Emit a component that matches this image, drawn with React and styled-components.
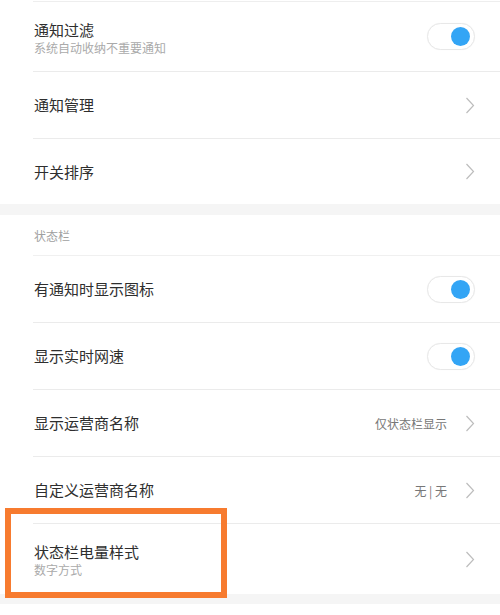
import React from "react";
import styled, { createGlobalStyle } from "styled-components";

const Global = createGlobalStyle`
  html, body { margin: 0; padding: 0; background: #ffffff; }
  body { font-family: "Noto Sans CJK SC", "Noto Sans", sans-serif; -webkit-font-smoothing: antialiased; }
`;

const Page = styled.div`
  position: relative;
  width: 500px;
  height: 615px;
  overflow: hidden;
  background: #ffffff;
  display: flex;
  flex-direction: column;
`;

const TopLine = styled.div`
  height: 1px;
  margin-top: 1px;
  margin-left: 33px;
  background: #eeeeee;
`;

const Group = styled.div`
  display: flex;
  flex-direction: column;
  background: #ffffff;
  flex: ${(p) => (p.$fill ? 1 : "none")};
`;

const Band = styled.div`
  height: ${(p) => p.$h}px;
  flex-shrink: 0;
  background: #f5f5f5;
`;

const Row = styled.div`
  display: flex;
  align-items: center;
  height: ${(p) => p.$h || 66}px;
  flex-shrink: 0;
  padding: 0 25px 0 34px;
  position: relative;
  &::after {
    content: "";
    display: ${(p) => (p.$last ? "none" : "block")};
    position: absolute;
    left: 33px;
    right: 0;
    bottom: -1px;
    height: 1px;
    background: #ebebeb;
  }
  margin-bottom: ${(p) => (p.$last ? 0 : 1)}px;
`;

const Texts = styled.div`
  flex: 1;
  display: flex;
  flex-direction: column;
  min-width: 0;
`;

const Title = styled.div`
  font-size: 15px;
  line-height: 22px;
  color: #2e2e2e;
`;

const Sub = styled.div`
  font-size: 12px;
  line-height: 14px;
  color: #aaaaaa;
`;

const Header = styled.div`
  height: 40px;
  display: flex;
  align-items: center;
  padding-left: 34px;
  font-size: 12px;
  color: #a0a0a0;
  position: relative;
  margin-bottom: 1px;
  &::after {
    content: "";
    position: absolute;
    left: 33px;
    right: 0;
    bottom: -1px;
    height: 1px;
    background: #f0f0f0;
  }
`;

const Value = styled.span`
  font-size: 12px;
  color: #777777;
  margin-right: 18px;
`;

const Track = styled.div`
  width: 42px;
  height: 25px;
  border-radius: 14px;
  border: 1px solid #e8e8e8;
  background: #ffffff;
  box-shadow: 0 0 1px rgba(0, 0, 0, 0.06);
  display: flex;
  align-items: center;
  justify-content: flex-end;
  padding-right: 4px;
  box-sizing: content-box;
`;

const Knob = styled.div`
  width: 19px;
  height: 19px;
  border-radius: 50%;
  background: #33a5f5;
`;

const Annot = styled.div`
  position: absolute;
  left: 5px;
  top: 508px;
  width: 222px;
  height: 90px;
  box-sizing: border-box;
  border: 6px solid #f77b2f;
  pointer-events: none;
`;

const Toggle = () => (
  <Track>
    <Knob />
  </Track>
);

const Chevron = () => (
  <svg width="10" height="17" viewBox="0 0 10 17" style={{ display: "block" }}>
    <path d="M1.5 1 L8.5 8.5 L1.5 16" fill="none" stroke="#bdbdbd" strokeWidth="1.2" />
  </svg>
);

export default function App() {
  return (
    <>
      <Global />
      <Page>
        <TopLine />
        <Group>
          <Row $h={69}>
            <Texts>
              <Title>通知过滤</Title>
              <Sub>系统自动收纳不重要通知</Sub>
            </Texts>
            <Toggle />
          </Row>
          <Row>
            <Texts>
              <Title>通知管理</Title>
            </Texts>
            <Chevron />
          </Row>
          <Row $last $h={65}>
            <Texts>
              <Title>开关排序</Title>
            </Texts>
            <Chevron />
          </Row>
        </Group>
        <Band $h={11} />
        <Group>
          <Header>状态栏</Header>
          <Row>
            <Texts>
              <Title>有通知时显示图标</Title>
            </Texts>
            <Toggle />
          </Row>
          <Row>
            <Texts>
              <Title>显示实时网速</Title>
            </Texts>
            <Toggle />
          </Row>
          <Row>
            <Texts>
              <Title>显示运营商名称</Title>
            </Texts>
            <Value>仅状态栏显示</Value>
            <Chevron />
          </Row>
          <Row>
            <Texts>
              <Title>自定义运营商名称</Title>
            </Texts>
            <Value>无 | 无</Value>
            <Chevron />
          </Row>
          <Row $last $h={70}>
            <Texts>
              <Title>状态栏电量样式</Title>
              <Sub>数字方式</Sub>
            </Texts>
            <Chevron />
          </Row>
        </Group>
        <Band $h={10} />
        <Group $fill />
        <Annot />
      </Page>
    </>
  );
}
